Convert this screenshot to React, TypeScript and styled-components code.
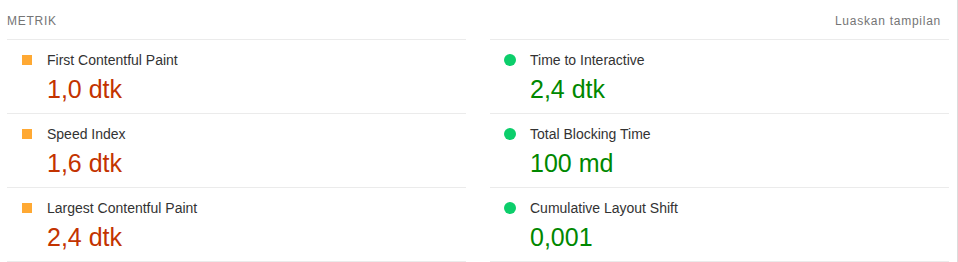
import * as React from "react";
import styled, { createGlobalStyle } from "styled-components";

const GlobalStyle = createGlobalStyle`
  html, body {
    margin: 0;
    padding: 0;
    background: #ffffff;
  }
  body {
    font-family: "Liberation Sans", Arial, Helvetica, sans-serif;
    -webkit-font-smoothing: antialiased;
  }
`;

const Panel = styled.div`
  width: 958px;
  height: 262px;
  box-sizing: border-box;
  padding: 0 8px 0 7px;
  border-right: 1px solid #dcdcdc;
  overflow: hidden;
`;

const Header = styled.div`
  display: flex;
  justify-content: space-between;
  align-items: flex-start;
  height: 39px;
  padding-top: 13px;
  box-sizing: border-box;
  font-size: 12px;
  line-height: 16px;
  letter-spacing: 0.75px;
  color: #757575;
`;

const Title = styled.div`
  text-transform: uppercase;
`;

const Toggle = styled.div`
  padding-right: 8px;
  cursor: pointer;
`;

const Columns = styled.div`
  display: grid;
  grid-template-columns: 459px 459px;
  column-gap: 24px;
`;

const Column = styled.div`
  display: flex;
  flex-direction: column;
  border-bottom: 1px solid #ebebeb;
`;

const Metric = styled.div`
  display: grid;
  grid-template-columns: 40px 1fr;
  grid-template-rows: 20px 30px;
  row-gap: 4px;
  height: 63px;
  padding-top: 10px;
  border-top: 1px solid #ebebeb;
`;

const Marker = styled.span<{ $pass: boolean }>`
  align-self: center;
  justify-self: center;
  width: ${(p) => (p.$pass ? "12px" : "10px")};
  height: ${(p) => (p.$pass ? "12px" : "10px")};
  border-radius: ${(p) => (p.$pass ? "50%" : "0")};
  background: ${(p) => (p.$pass ? "#0cce6b" : "#ffa933")};
`;

const Label = styled.div`
  font-size: 14px;
  line-height: 20px;
  color: #333333;
`;

const Value = styled.div<{ $pass: boolean }>`
  grid-column: 2;
  font-size: 25px;
  line-height: 30px;
  color: ${(p) => (p.$pass ? "#008800" : "#c33300")};
`;

type Item = { label: string; value: string; pass: boolean };

const left: Item[] = [
  { label: "First Contentful Paint", value: "1,0 dtk", pass: false },
  { label: "Speed Index", value: "1,6 dtk", pass: false },
  { label: "Largest Contentful Paint", value: "2,4 dtk", pass: false },
];

const right: Item[] = [
  { label: "Time to Interactive", value: "2,4 dtk", pass: true },
  { label: "Total Blocking Time", value: "100 md", pass: true },
  { label: "Cumulative Layout Shift", value: "0,001", pass: true },
];

const MetricColumn = ({ items }: { items: Item[] }) => (
  <Column>
    {items.map((m) => (
      <Metric key={m.label}>
        <Marker $pass={m.pass} />
        <Label>{m.label}</Label>
        <Value $pass={m.pass}>{m.value}</Value>
      </Metric>
    ))}
  </Column>
);

export default function App() {
  return (
    <>
      <GlobalStyle />
      <Panel>
        <Header>
          <Title>Metrik</Title>
          <Toggle>Luaskan tampilan</Toggle>
        </Header>
        <Columns>
          <MetricColumn items={left} />
          <MetricColumn items={right} />
        </Columns>
      </Panel>
    </>
  );
}
